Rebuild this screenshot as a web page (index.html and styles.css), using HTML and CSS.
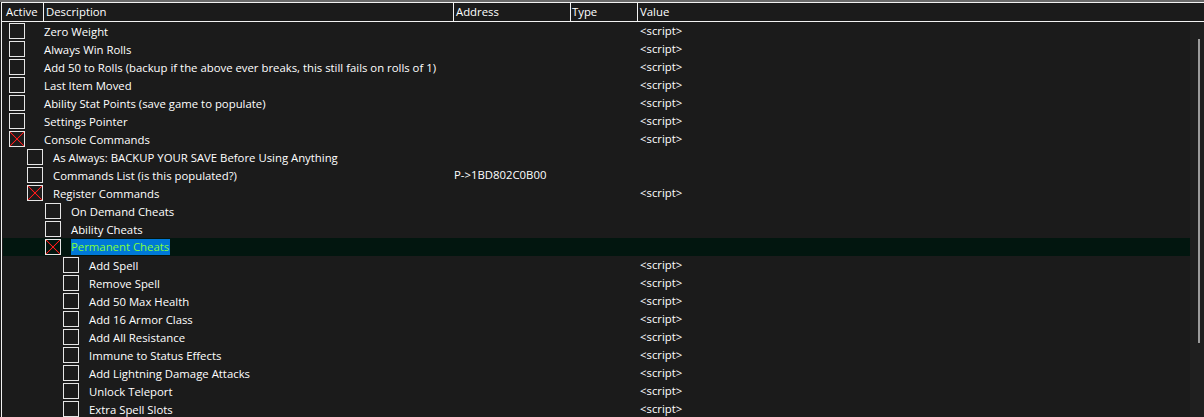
FILE: index.html
```html
<!DOCTYPE html>
<html>
<head>
<meta charset="utf-8">
<link rel="stylesheet" href="styles.css">
</head>
<body>
<div class="topbar"></div>
<div class="table">
  <div class="header">
    <div class="hc c-active">Active</div>
    <div class="hc c-desc">Description</div>
    <div class="hc c-addr">Address</div>
    <div class="hc c-type">Type</div>
    <div class="hc c-value">Value</div>
  </div>
  <div class="body">
    <div class="rows">
      <div class="row"><div class="tree l0"><span class="cb"></span><span class="txt">Zero Weight</span></div><div class="addr"></div><div class="type"></div><div class="val">&lt;script&gt;</div></div>
      <div class="row"><div class="tree l0"><span class="cb"></span><span class="txt">Always Win Rolls</span></div><div class="addr"></div><div class="type"></div><div class="val">&lt;script&gt;</div></div>
      <div class="row"><div class="tree l0"><span class="cb"></span><span class="txt">Add 50 to Rolls (backup if the above ever breaks, this still fails on rolls of 1)</span></div><div class="addr"></div><div class="type"></div><div class="val">&lt;script&gt;</div></div>
      <div class="row"><div class="tree l0"><span class="cb"></span><span class="txt">Last Item Moved</span></div><div class="addr"></div><div class="type"></div><div class="val">&lt;script&gt;</div></div>
      <div class="row"><div class="tree l0"><span class="cb"></span><span class="txt">Ability Stat Points (save game to populate)</span></div><div class="addr"></div><div class="type"></div><div class="val">&lt;script&gt;</div></div>
      <div class="row"><div class="tree l0"><span class="cb"></span><span class="txt">Settings Pointer</span></div><div class="addr"></div><div class="type"></div><div class="val">&lt;script&gt;</div></div>
      <div class="row"><div class="tree l0"><span class="cb on"></span><span class="txt">Console Commands</span></div><div class="addr"></div><div class="type"></div><div class="val">&lt;script&gt;</div></div>
      <div class="row"><div class="tree l1"><span class="cb"></span><span class="txt">As Always: BACKUP YOUR SAVE Before Using Anything</span></div><div class="addr"></div><div class="type"></div><div class="val"></div></div>
      <div class="row"><div class="tree l1"><span class="cb"></span><span class="txt">Commands List (is this populated?)</span></div><div class="addr">P-&gt;1BD802C0B00</div><div class="type"></div><div class="val"></div></div>
      <div class="row"><div class="tree l1"><span class="cb on"></span><span class="txt">Register Commands</span></div><div class="addr"></div><div class="type"></div><div class="val">&lt;script&gt;</div></div>
      <div class="row"><div class="tree l2"><span class="cb"></span><span class="txt">On Demand Cheats</span></div><div class="addr"></div><div class="type"></div><div class="val"></div></div>
      <div class="row"><div class="tree l2"><span class="cb"></span><span class="txt">Ability Cheats</span></div><div class="addr"></div><div class="type"></div><div class="val"></div></div>
      <div class="row sel"><div class="tree l2"><span class="cb on"></span><span class="txt">Permanent Cheats</span></div><div class="addr"></div><div class="type"></div><div class="val"></div></div>
      <div class="row"><div class="tree l3"><span class="cb"></span><span class="txt">Add Spell</span></div><div class="addr"></div><div class="type"></div><div class="val">&lt;script&gt;</div></div>
      <div class="row"><div class="tree l3"><span class="cb"></span><span class="txt">Remove Spell</span></div><div class="addr"></div><div class="type"></div><div class="val">&lt;script&gt;</div></div>
      <div class="row"><div class="tree l3"><span class="cb"></span><span class="txt">Add 50 Max Health</span></div><div class="addr"></div><div class="type"></div><div class="val">&lt;script&gt;</div></div>
      <div class="row"><div class="tree l3"><span class="cb"></span><span class="txt">Add 16 Armor Class</span></div><div class="addr"></div><div class="type"></div><div class="val">&lt;script&gt;</div></div>
      <div class="row"><div class="tree l3"><span class="cb"></span><span class="txt">Add All Resistance</span></div><div class="addr"></div><div class="type"></div><div class="val">&lt;script&gt;</div></div>
      <div class="row"><div class="tree l3"><span class="cb"></span><span class="txt">Immune to Status Effects</span></div><div class="addr"></div><div class="type"></div><div class="val">&lt;script&gt;</div></div>
      <div class="row"><div class="tree l3"><span class="cb"></span><span class="txt">Add Lightning Damage Attacks</span></div><div class="addr"></div><div class="type"></div><div class="val">&lt;script&gt;</div></div>
      <div class="row"><div class="tree l3"><span class="cb"></span><span class="txt">Unlock Teleport</span></div><div class="addr"></div><div class="type"></div><div class="val">&lt;script&gt;</div></div>
      <div class="row"><div class="tree l3"><span class="cb"></span><span class="txt">Extra Spell Slots</span></div><div class="addr"></div><div class="type"></div><div class="val">&lt;script&gt;</div></div>
    </div>
    <div class="scrolltrack"><div class="thumb"></div></div>
  </div>
</div>
</body>
</html>
```

FILE: styles.css
```css
* { box-sizing: border-box; }
html, body {
  margin: 0;
  padding: 0;
  background: #1b1b1b;
  overflow: hidden;
}
body {
  width: 1204px;
  height: 417px;
  font-family: "Open Sans", "Noto Sans", sans-serif;
  font-size: 11.35px;
  color: #ffffff;
  background: #1b1b1b;
}
.topbar {
  height: 2px;
  background: #6a6a6a;
}
.table {
  margin-left: 1px;
  border-left: 1px solid #f2f2f2;
  border-top: 1px solid #f2f2f2;
  height: 415px;
  display: flex;
  flex-direction: column;
}
.header {
  display: flex;
  height: 19px;
  border-bottom: 1px solid #f2f2f2;
  background: #1b1b1b;
  flex: none;
}
.hc {
  height: 18px;
  line-height: 17px;
  border-right: 1px solid #f2f2f2;
  white-space: nowrap;
}
.c-active { width: 42px; padding-left: 4px; }
.c-desc { width: 410px; padding-left: 2px; }
.c-addr { width: 117px; padding-left: 2px; }
.c-type { width: 67px; padding-left: 1px; }
.c-value { flex: 1; border-right: none; padding-left: 2px; }

.body {
  flex: 1;
  display: flex;
  min-height: 0;
}
.rows {
  width: 1188px;
  padding-left: 1px;
  display: flex;
  flex-direction: column;
}
.row {
  display: flex;
  height: 18px;
  line-height: 17px;
  white-space: nowrap;
  flex: none;
}
.row.sel { background: #02160f; }
.tree {
  width: 451px;
  display: flex;
  align-items: center;
}
.tree.l0 { padding-left: 6px; }
.tree.l1 { padding-left: 24px; }
.tree.l2 { padding-left: 42px; }
.tree.l3 { padding-left: 60px; }
.cb {
  width: 16px;
  height: 16px;
  border: 1px solid #e6e6e6;
  flex: none;
  margin-right: 10px;
}
.tree.l0 .cb { margin-right: 19px; }
.cb.on {
  background:
    linear-gradient(to top right, transparent calc(50% - 0.8px), #ff1a1a 50%, transparent calc(50% + 0.8px)),
    linear-gradient(to bottom right, transparent calc(50% - 0.8px), #ff1a1a 50%, transparent calc(50% + 0.8px));
}
.sel .txt {
  background: #0078d7;
  color: #7fff3a;
  line-height: 16px;
  padding: 0 1px 0 0;
}
.addr { width: 116px; }
.type { width: 70px; }
.val { flex: 1; }

.scrolltrack {
  width: 14px;
  background: #1f1f1f;
  position: relative;
}
.thumb {
  position: absolute;
  left: 8px;
  top: 17px;
  width: 2px;
  height: 304px;
  background: #9c9c9c;
}
```
